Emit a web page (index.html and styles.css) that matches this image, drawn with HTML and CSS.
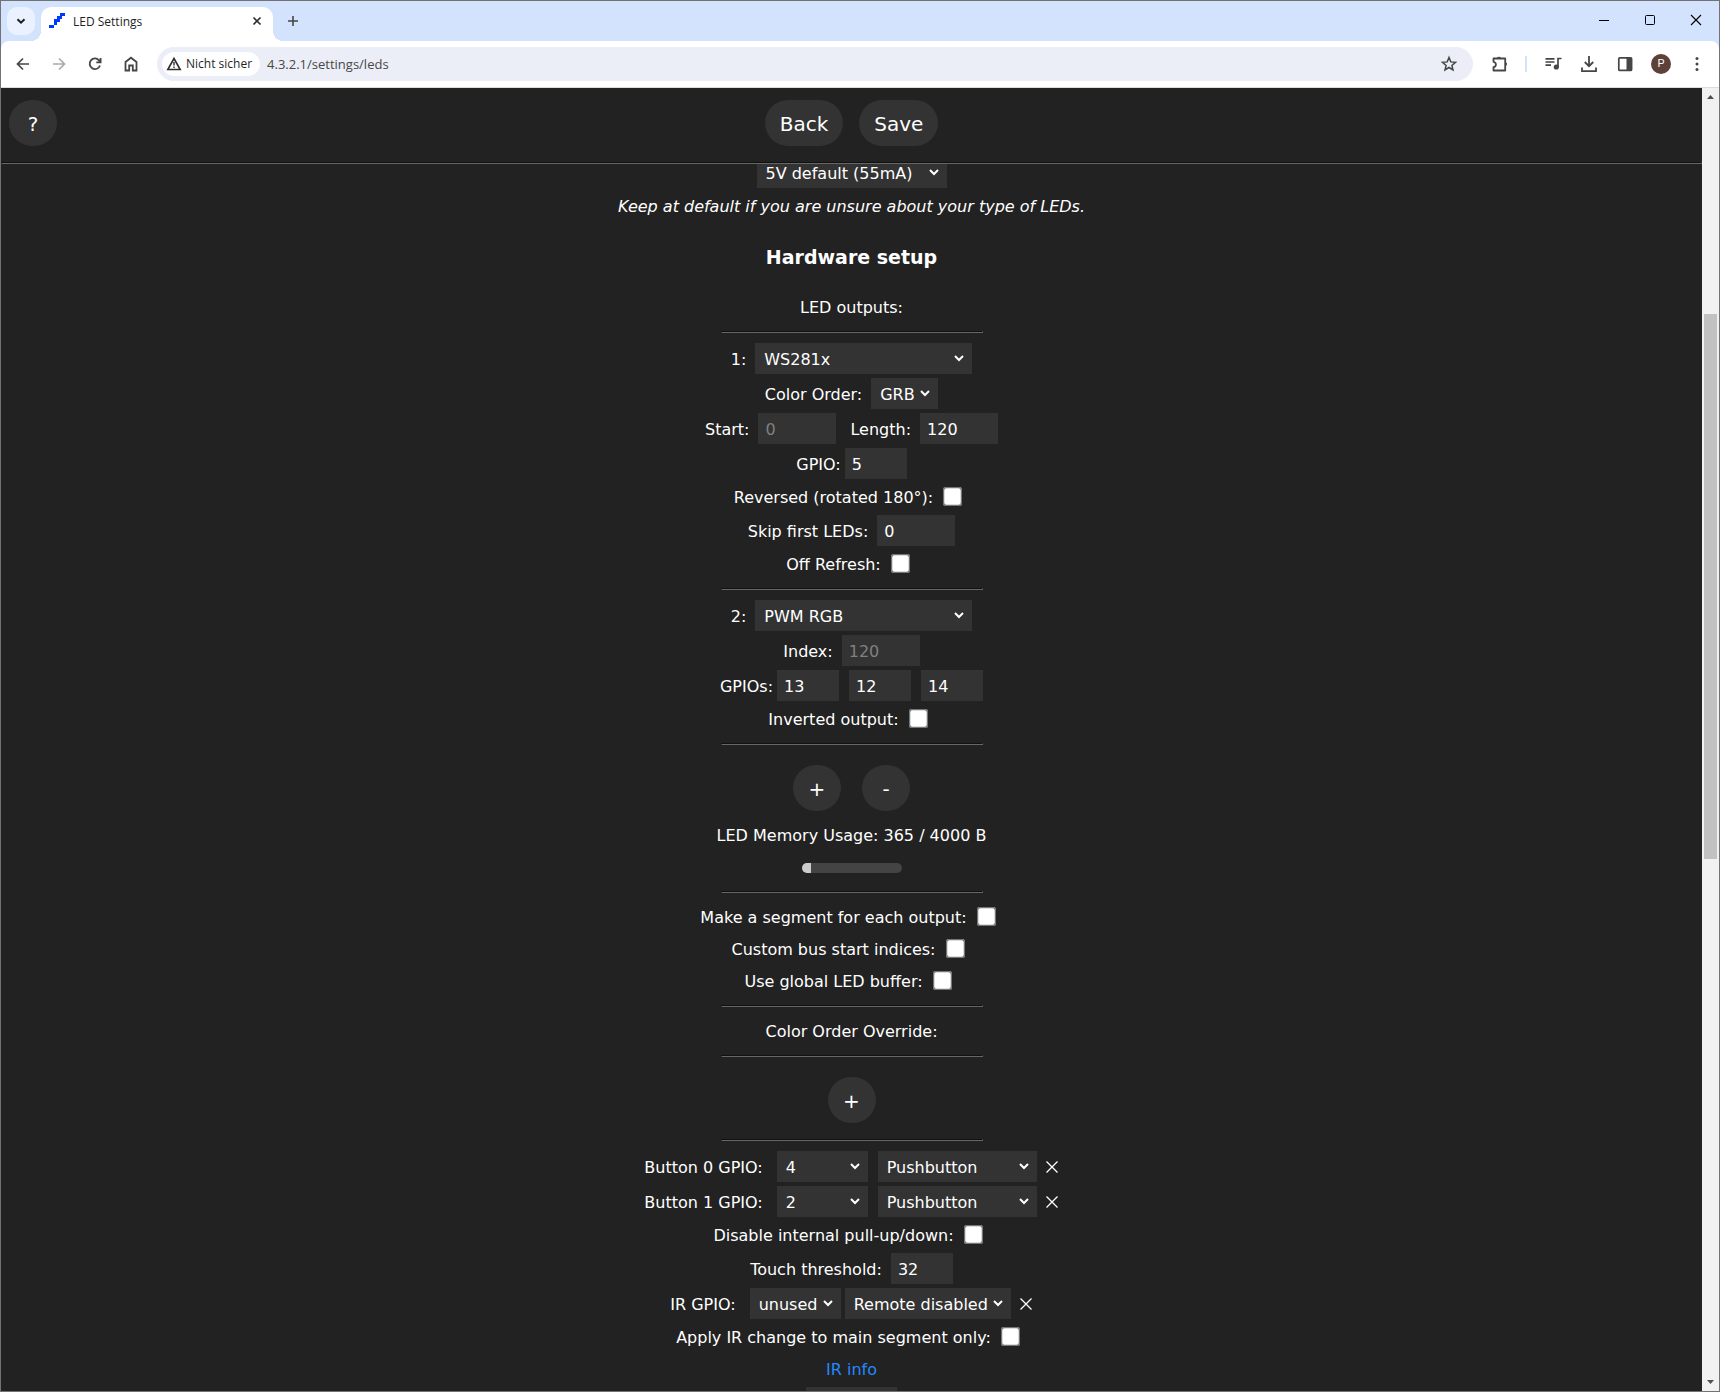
FILE: index.html
```html
<!DOCTYPE html>
<html lang="en">
<head>
<meta charset="utf-8">
<title>LED Settings</title>
<link rel="stylesheet" href="styles.css">
</head>
<body>
<div class="window">
  <div class="tabstrip">
    <button class="tab-search" aria-label="Search tabs"><svg width="16" height="16" viewBox="0 0 16 16"><path d="M4.500 6.200l3.500 3.500 3.500-3.500" fill="none" stroke="#1f1f1f" stroke-width="2"/></svg></button>
    <div class="tab">
      <svg class="favicon" width="16" height="16" viewBox="0 0 16 16" shape-rendering="crispEdges"><path d="M11 0h5v3h-5zM8 3h5v3h-5zM5 6h6v3h-6zM5 9h3v3h-3zM0 12h5v3h-5z" fill="#0038ff"/></svg>
      <span class="tab-title">LED Settings</span>
      <button class="tab-close" aria-label="Close tab"><svg width="16" height="16" viewBox="0 0 16 16"><path d="M4.500 4.500l7 7m0-7l-7 7" stroke="#303030" stroke-width="1.700"/></svg></button>
    </div>
    <button class="new-tab" aria-label="New tab"><svg width="16" height="16" viewBox="0 0 16 16"><path d="M3 8h10M8 3v10" stroke="#444746" stroke-width="1.600"/></svg></button>
    <div class="caption">
      <button aria-label="Minimize"><svg width="12" height="12" viewBox="0 0 12 12"><path d="M1 6.500h10" stroke="#000"/></svg></button>
      <button aria-label="Maximize"><svg width="12" height="12" viewBox="0 0 12 12"><rect x="1.500" y="1.500" width="9" height="9" rx="1" fill="none" stroke="#000"/></svg></button>
      <button aria-label="Close"><svg width="12" height="12" viewBox="0 0 12 12"><path d="M1 1l10 10M11 1L1 11" stroke="#000" stroke-width="1.100"/></svg></button>
    </div>
  </div>

  <div class="toolbar">
    <button class="tool" aria-label="Back"><svg width="20" height="20" viewBox="0 0 20 20"><path d="M16 10H5M10 4.500L4.500 10l5.500 5.500" fill="none" stroke="#444746" stroke-width="1.700"/></svg></button>
    <button class="tool" aria-label="Forward"><svg width="20" height="20" viewBox="0 0 20 20"><path d="M4 10h11M10 4.500l5.500 5.500-5.500 5.500" fill="none" stroke="#a9abab" stroke-width="1.700"/></svg></button>
    <button class="tool" aria-label="Reload"><svg width="20" height="20" viewBox="0 0 20 20"><path d="M15 11.500a5.300 5.300 0 1 1-1-5.200l1.500 1.700M15.600 4v4.300h-4.300" fill="none" stroke="#444746" stroke-width="1.800"/></svg></button>
    <button class="tool" aria-label="Home"><svg width="20" height="20" viewBox="0 0 20 20"><path d="M4.500 16.500V8L10 3.700 15.500 8v8.500h-3.700v-5H8.200v5z" fill="none" stroke="#444746" stroke-width="1.800"/></svg></button>
    <div class="omnibox">
      <button class="chip"><svg width="16" height="16" viewBox="0 0 16 16"><path d="M8 2.500L14.200 13.500H1.800z" fill="none" stroke="#303030" stroke-width="1.600"/><path d="M8 6v3.500M8 10.500v1.500" stroke="#303030" stroke-width="1.400"/></svg>Nicht sicher</button>
      <input class="url" type="text" value="4.3.2.1/settings/leds" aria-label="Address">
      <button class="tool" aria-label="Bookmark"><svg width="20" height="20" viewBox="0 0 20 20"><path d="M10 3.500l1.800 4.400 4.700.4-3.600 3.100 1.100 4.600-4-2.500-4 2.500 1.100-4.600-3.600-3.100 4.700-.4z" fill="none" stroke="#444746" stroke-width="1.500"/></svg></button>
    </div>
    <button class="tool" aria-label="Extensions"><svg width="20" height="20" viewBox="0 0 20 20"><path d="M3.500 4.500h11.700v12H3.500v-3.300c3.200-.6 3.200-4.800 0-5.400V4.500z" fill="none" stroke="#444746" stroke-width="1.800" stroke-linejoin="round"/><path d="M7 4a2.200 2.200 0 0 1 4 0v1H7zM15.500 8a2.200 2.200 0 0 1 0 4.200z" fill="#444746"/></svg></button>
    <span class="divider"></span>
    <button class="tool" aria-label="Media"><svg width="20" height="20" viewBox="0 0 20 20"><path d="M2.500 4.800h9M2.500 8h9M2.500 11.200H8M15 13V4.500h3.500" fill="none" stroke="#444746" stroke-width="1.700"/><circle cx="13.300" cy="13" r="2.600" fill="#444746"/></svg></button>
    <button class="tool" aria-label="Downloads"><svg width="20" height="20" viewBox="0 0 20 20"><path d="M10 2v10M5.800 8l4.200 4.200L14.200 8M3 13.500v3.600h14v-3.600" fill="none" stroke="#444746" stroke-width="1.800"/></svg></button>
    <button class="tool" aria-label="Side panel"><svg width="20" height="20" viewBox="0 0 20 20"><rect x="3.800" y="3.800" width="12.800" height="12.600" rx="1" fill="none" stroke="#444746" stroke-width="1.700"/><path d="M11.500 3.500h5v13h-5z" fill="#444746"/></svg></button>
    <button class="tool" aria-label="Profile"><span class="avatar">P</span></button>
    <button class="tool" aria-label="Menu"><svg width="20" height="20" viewBox="0 0 20 20"><g fill="#444746"><circle cx="10" cy="4.500" r="1.500"/><circle cx="10" cy="10" r="1.500"/><circle cx="10" cy="15.500" r="1.500"/></g></svg></button>
  </div>

  <div class="viewport">
    <div class="page">
      <header class="topbar">
        <button class="round help" type="button">?</button>
        <div class="actions">
          <button class="round" type="button">Back</button>
          <button class="round" type="submit" form="leds">Save</button>
        </div>
      </header>
      <form class="settings" id="leds">
        <div class="row first"><select class="w-amp" aria-label="LED voltage"><option>5V default (55mA)</option></select></div>
        <p class="text"><i>Keep at default if you are unsure about your type of LEDs.</i></p>
        <h3>Hardware setup</h3>
        <p class="text">LED outputs:</p>
        <hr>
        <div class="row"><label for="type1">1:</label><select id="type1" class="w-type"><option>WS281x</option></select></div>
        <div class="row"><label for="order">Color Order:</label><select id="order" class="w-order"><option>GRB</option></select></div>
        <div class="row"><label for="start">Start:</label><input id="start" class="w-m" type="number" value="0" disabled><label class="second" for="len">Length:</label><input id="len" class="w-m" type="number" value="120"></div>
        <div class="row tight"><label for="gpio">GPIO:</label><input id="gpio" class="w-s" type="number" value="5"></div>
        <div class="row check"><label for="rev">Reversed (rotated 180°):</label><input id="rev" type="checkbox"></div>
        <div class="row"><label for="skip">Skip first LEDs:</label><input id="skip" class="w-m" type="number" value="0"></div>
        <div class="row check"><label for="off">Off Refresh:</label><input id="off" type="checkbox"></div>
        <hr>
        <div class="row"><label for="type2">2:</label><select id="type2" class="w-type"><option>PWM RGB</option></select></div>
        <div class="row"><label for="index">Index:</label><input id="index" class="w-m" type="number" value="120" disabled></div>
        <div class="row tight"><label for="g1">GPIOs:</label><span class="pins"><input id="g1" class="w-s" type="number" value="13"><input class="w-s" type="number" value="12" aria-label="Second GPIO"><input class="w-s" type="number" value="14" aria-label="Third GPIO"></span></div>
        <div class="row check"><label for="inv">Inverted output:</label><input id="inv" type="checkbox"></div>
        <hr>
        <div class="buttons"><button class="round" type="button">+</button><button class="round" type="button">-</button></div>
        <p class="text">LED Memory Usage: 365 / 4000 B</p>
        <div class="memory"><div class="memory-used" style="width:9%"></div></div>
        <hr>
        <div class="row check"><label for="seg">Make a segment for each output:</label><input id="seg" type="checkbox"></div>
        <div class="row check"><label for="bus">Custom bus start indices:</label><input id="bus" type="checkbox"></div>
        <div class="row check"><label for="buf">Use global LED buffer:</label><input id="buf" type="checkbox"></div>
        <hr>
        <p class="text">Color Order Override:</p>
        <hr>
        <div class="buttons"><button class="round" type="button">+</button></div>
        <hr>
        <div class="row wide"><label for="b0">Button 0 GPIO:</label><span class="pins"><select id="b0" class="w-pin"><option>4</option></select><select class="w-push" aria-label="Button 0 type"><option>Pushbutton</option></select></span><button class="clear" type="button" aria-label="Clear button 0"><svg width="14" height="14" viewBox="0 0 14 14"><path d="M1.500 1.500l11 11m0-11l-11 11" stroke="#fff" stroke-width="1.300"/></svg></button></div>
        <div class="row wide"><label for="b1">Button 1 GPIO:</label><span class="pins"><select id="b1" class="w-pin"><option>2</option></select><select class="w-push" aria-label="Button 1 type"><option>Pushbutton</option></select></span><button class="clear" type="button" aria-label="Clear button 1"><svg width="14" height="14" viewBox="0 0 14 14"><path d="M1.500 1.500l11 11m0-11l-11 11" stroke="#fff" stroke-width="1.300"/></svg></button></div>
        <div class="row check"><label for="pull">Disable internal pull-up/down:</label><input id="pull" type="checkbox"></div>
        <div class="row"><label for="touch">Touch threshold:</label><input id="touch" class="w-s" type="number" value="32"></div>
        <div class="row wide"><label for="ir">IR GPIO:</label><span class="pins close"><select id="ir" class="w-pin"><option>unused</option></select><select class="w-remote" aria-label="Remote type"><option>Remote disabled</option></select></span><button class="clear" type="button" aria-label="Clear IR"><svg width="14" height="14" viewBox="0 0 14 14"><path d="M1.500 1.500l11 11m0-11l-11 11" stroke="#fff" stroke-width="1.300"/></svg></button></div>
        <div class="row check"><label for="main">Apply IR change to main segment only:</label><input id="main" type="checkbox"></div>
        <p class="text"><a href="#ir">IR info</a></p>
        <div class="row"><select class="w-pin" aria-label="Relay GPIO"></select></div>
      </form>
    </div>
    <div class="scrollbar">
      <svg width="17" height="17" viewBox="0 0 17 17"><path d="M5 11h7L8.500 7z" fill="#505050"/></svg>
      <div class="track"><span class="before"></span><span class="thumb"></span><span class="after"></span></div>
      <svg width="17" height="17" viewBox="0 0 17 17"><path d="M5 6h7l-3.500 4z" fill="#505050"/></svg>
    </div>
  </div>
</div>
</body>
</html>
```
FILE: styles.css
```css
* { box-sizing: border-box; }
body { margin: 0; background: #222; }
button { border: 0; padding: 0; background: none; font: inherit; color: inherit; display: flex; align-items: center; justify-content: center; }
svg { display: block; flex: none; }

.window { height: 100vh; display: flex; flex-direction: column; border: 1px solid #737373; overflow: hidden; background: #d3e3fd; font: 12px/16px "Open Sans", sans-serif; color: #1f1f1f; }

/* browser frame */
.tabstrip { display: flex; height: 40px; flex: none; padding: 6px 0 0 6px; }
.tab-search { width: 28px; height: 28px; border-radius: 10px; background: #eaf2ff; }
.tab { position: relative; display: flex; align-items: center; width: 232px; height: 34px; margin-left: 6px; padding: 0 8px 6px; border-radius: 10px 10px 0 0; background: #fff; }
.tab::before, .tab::after { content: ""; position: absolute; bottom: 0; width: 10px; height: 10px; }
.tab::before { left: -10px; background: radial-gradient(circle at 0 0, transparent 10px, #fff 10px); }
.tab::after { right: -10px; background: radial-gradient(circle at 100% 0, transparent 10px, #fff 10px); }
.tab-title { flex: 1; margin-left: 8px; padding-top: 2px; }
.new-tab { width: 28px; height: 28px; margin-left: 6px; }
.caption { display: flex; margin: -6px 0 0 auto; }
.caption button { width: 46px; height: 38px; }

.toolbar { display: flex; align-items: center; gap: 8px; flex: none; height: 47px; padding: 0 8px; border-bottom: 1px solid #dcdcdc; border-radius: 8px 8px 0 0; background: #fff; }
.tool { width: 28px; height: 28px; flex: none; }
.omnibox { display: flex; align-items: center; flex: 1; height: 34px; margin: 0 5px 0 4px; padding: 0 10px 0 5px; border-radius: 17px; background: #ebeef7; }
.chip { gap: 4px; height: 24px; padding: 0 8px 0 4px; border-radius: 12px; background: #fff; }
.url { flex: 1; min-width: 0; border: 0; padding: 0 7px; background: none; font: 13px/20px "Open Sans", sans-serif; color: #474747; }
.divider { width: 2px; height: 16px; margin: 0 4px 0 3px; background: #d3e3fd; }
.avatar { width: 20px; height: 20px; border-radius: 50%; background: #5d4037; color: #fff; font: 11px/20px Roboto, sans-serif; text-align: center; }

/* page */
.viewport { flex: 1; min-height: 0; display: flex; background: #222; }
.page { flex: 1; min-width: 0; overflow: hidden; font: 16px/32px "DejaVu Sans", Verdana, sans-serif; color: #fff; }
.topbar { position: relative; z-index: 1; display: grid; grid-template-columns: 1fr auto 1fr; align-items: start; padding: 12px 8px 16px; background: #222; }
.topbar::after { content: ""; position: absolute; left: 0; right: 0; bottom: -2px; border: 1px inset #666; }
.actions { display: flex; gap: 16px; }
.round { min-width: 48px; height: 46px; padding: 2px 15px 0; border-radius: 23px; background: #333; font-size: 20px; line-height: 24px; }
.help { justify-self: start; }

.settings { display: flex; flex-direction: column; align-items: center; }
.row { display: flex; align-items: center; gap: 9px; height: 35px; flex: none; }
.first { margin-top: -7px; }
.tight { gap: 4px; }
.wide { gap: 8px; }
.wide > label { margin-right: 6px; }
.second { margin-left: 5px; }
.check { gap: 10px; height: 32px; padding-right: 7px; }
label { padding-top: 2px; line-height: 30px; }
.text { margin: 0; padding-top: 2px; line-height: 30px; }
h3 { margin: 20px 0; padding-top: 2px; font-size: 19px; line-height: 27px; }
hr { width: 262px; margin: 8px 0; border: 1px inset #666; }
a { color: #28f; text-decoration: none; }

select, input { margin: 0; border-radius: 0; font: inherit; line-height: 19px; color: #fff; }
select, input[type="number"] { height: 31px; border: 5px solid #333; background: #333; }
select { padding: 1px 0 0; }
input[type="number"] { padding: 2px 2px 0; }
input:disabled { color: #808080; }
input[type="checkbox"] { width: 13px; height: 13px; margin: 2px 3px 4px; transform: scale(1.5); }
.w-amp { width: 190px; }
.w-type { width: 217px; }
.w-order { width: 67px; }
.w-m { width: 78px; }
.w-s { width: 62px; }
.w-pin { width: 91px; }
.w-push { width: 159px; }
.w-remote { width: 166px; }
.pins { display: flex; gap: 10px; }
.close { gap: 4px; }

.buttons { display: flex; gap: 21px; padding: 12px 0 8px; }
.memory { width: 100px; height: 10px; margin: 12px 0 10px; border-radius: 5px; overflow: hidden; background: #444; }
.memory-used { height: 100%; background: #ccc; }

.scrollbar { display: flex; flex-direction: column; width: 17px; flex: none; background: #f1f1f1; }
.track { flex: 1; display: flex; flex-direction: column; padding: 0 2px; }
.before { flex: 209; }
.thumb { flex: 545; background: #c1c1c1; }
.after { flex: 515; }
```
